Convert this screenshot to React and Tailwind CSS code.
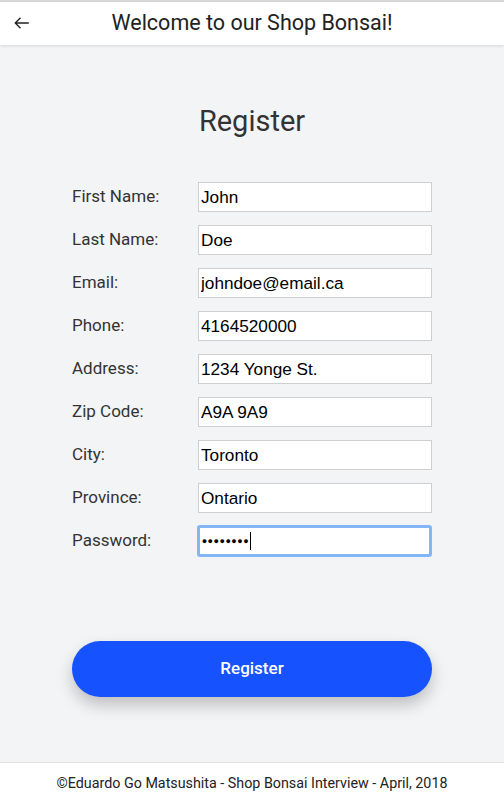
const fields = [
  ['First Name:', 'John', 'text'],
  ['Last Name:', 'Doe', 'text'],
  ['Email:', 'johndoe@email.ca', 'text'],
  ['Phone:', '4164520000', 'text'],
  ['Address:', '1234 Yonge St.', 'text'],
  ['Zip Code:', 'A9A 9A9', 'text'],
  ['City:', 'Toronto', 'text'],
  ['Province:', 'Ontario', 'text'],
]

export default function App() {
  return (
    <div className="flex h-[805px] w-[504px] flex-col bg-[#f3f4f6] font-['Roboto',sans-serif] text-[#333]">
      {/* Header */}
      <div className="h-[2px] bg-[#d8d8d8]" />
      <header className="relative z-10 flex h-[43px] items-center bg-white shadow-[0_1px_3px_rgba(0,0,0,0.12)]">
        <button className="absolute left-[13px] top-[12px] text-[#222]">
          <svg width="18" height="18" viewBox="0 0 24 24" fill="none" stroke="currentColor" strokeWidth="1.8">
            <path d="M21 12H3M10 5l-7 7 7 7" />
          </svg>
        </button>
        <h1 className="w-full text-center text-[21.5px] text-[#222]">Welcome to our Shop Bonsai!</h1>
      </header>

      {/* Body */}
      <main className="flex flex-1 flex-col px-[72px]">
        <h2 className="mt-[58px] text-center text-[29px] leading-[36px] text-[#333]">Register</h2>
        <div className="mt-[43px] flex flex-col gap-[13px]">
          {fields.map(([label, value]) => (
            <div key={label} className="flex h-[30px] items-center">
              <label className="w-[126px] text-[17px] text-[#333]">{label}</label>
              <input
                readOnly
                defaultValue={value}
                className="h-[30px] w-[234px] border border-[#cfcfcf] bg-white px-[2px] font-['Liberation_Sans',Arial,sans-serif] text-[17.2px] text-black outline-none"
              />
            </div>
          ))}
          <div className="flex h-[30px] items-center">
            <label className="w-[126px] text-[17px] text-[#333]">Password:</label>
            <div className="-ml-[1px] flex h-[32px] w-[236px] items-center rounded-[3px] border-[3px] border-[#83b6f7] bg-white px-[2px]">
              <span className="font-['Liberation_Sans',Arial,sans-serif] text-[9px] leading-none tracking-[0.5px] text-black">●●●●●●●●</span>
              <span className="ml-[1px] h-[18px] w-px bg-black" />
            </div>
          </div>
        </div>

        <button className="mt-[85px] h-[56px] w-[360px] rounded-full bg-[#1652fe] text-[17px] font-medium text-white shadow-[0_8px_16px_rgba(0,0,0,0.22)]">
          Register
        </button>
      </main>

      {/* Footer */}
      <footer className="flex h-[43px] items-center justify-center border-t border-[#e2e2e2] bg-white text-[14.3px] text-[#222]">
        ©Eduardo Go Matsushita - Shop Bonsai Interview - April, 2018
      </footer>
    </div>
  )
}
